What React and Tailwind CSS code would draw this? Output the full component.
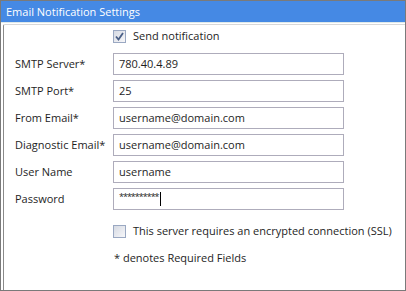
const FONT = { fontFamily: '"Open Sans", "Noto Sans", sans-serif' };

const fields = [
  { label: "SMTP Server*", value: "780.40.4.89" },
  { label: "SMTP Port*", value: "25" },
  { label: "From Email*", value: "username@domain.com" },
  { label: "Diagnostic Email*", value: "username@domain.com" },
  { label: "User Name", value: "username" },
  { label: "Password", value: "**********", password: true },
];

function Check({ checked }) {
  return (
    <div className="w-[13px] h-[13px] border border-[#9aa8c2] bg-gradient-to-br from-[#d6dae3] to-[#f7f7f9] flex items-center justify-center shrink-0">
      {checked && (
        <svg width="9" height="9" viewBox="0 0 9 9">
          <path d="M1 4.5 L3.5 7.5 L8 1" fill="none" stroke="#4a5f86" strokeWidth="1.8" />
        </svg>
      )}
    </div>
  );
}

export default function App() {
  return (
    <div className="w-[406px] h-[291px] bg-white border border-[#7a7a7a] flex flex-col text-[11px] text-[#1e1e1e]" style={FONT}>
      <div className="h-[21px] bg-[#4589e4] text-white px-[5px] flex items-center leading-none">Email Notification Settings</div>
      <div className="h-px bg-[#dfe9e9]" />
      <div className="flex-1 ml-[2px] mt-px border-l border-[#8a8a8a] border-t border-t-[#d8d8d8] rounded-tl-[2px] pl-[11px] pt-[5px]">
        <div className="flex items-center gap-[7px] ml-[98px] h-[13px]">
          <Check checked />
          <span>Send notification</span>
        </div>
        <div className="flex flex-col gap-[5px] mt-[10px]">
          {fields.map((f) => (
            <div key={f.label} className="flex items-center">
              <div className="w-[98px] pr-1 whitespace-nowrap">{f.label}</div>
              <div className="w-[231px] h-[22px] border border-[#aeacbb] flex items-center px-[5px] whitespace-nowrap">
                {f.password ? (
                  <span className="flex items-center">
                    <span className="text-[9px] tracking-[-1px] -mt-[4px]">**********</span>
                    <span className="w-px h-[14px] bg-black ml-[1px]" />
                  </span>
                ) : (
                  f.value
                )}
              </div>
            </div>
          ))}
        </div>
        <div className="flex items-center gap-[7px] ml-[98px] mt-[15px] h-[13px] whitespace-nowrap">
          <Check />
          <span>This server requires an encrypted connection (SSL)</span>
        </div>
        <div className="ml-[99px] mt-[12px]">* denotes Required Fields</div>
      </div>
    </div>
  );
}
